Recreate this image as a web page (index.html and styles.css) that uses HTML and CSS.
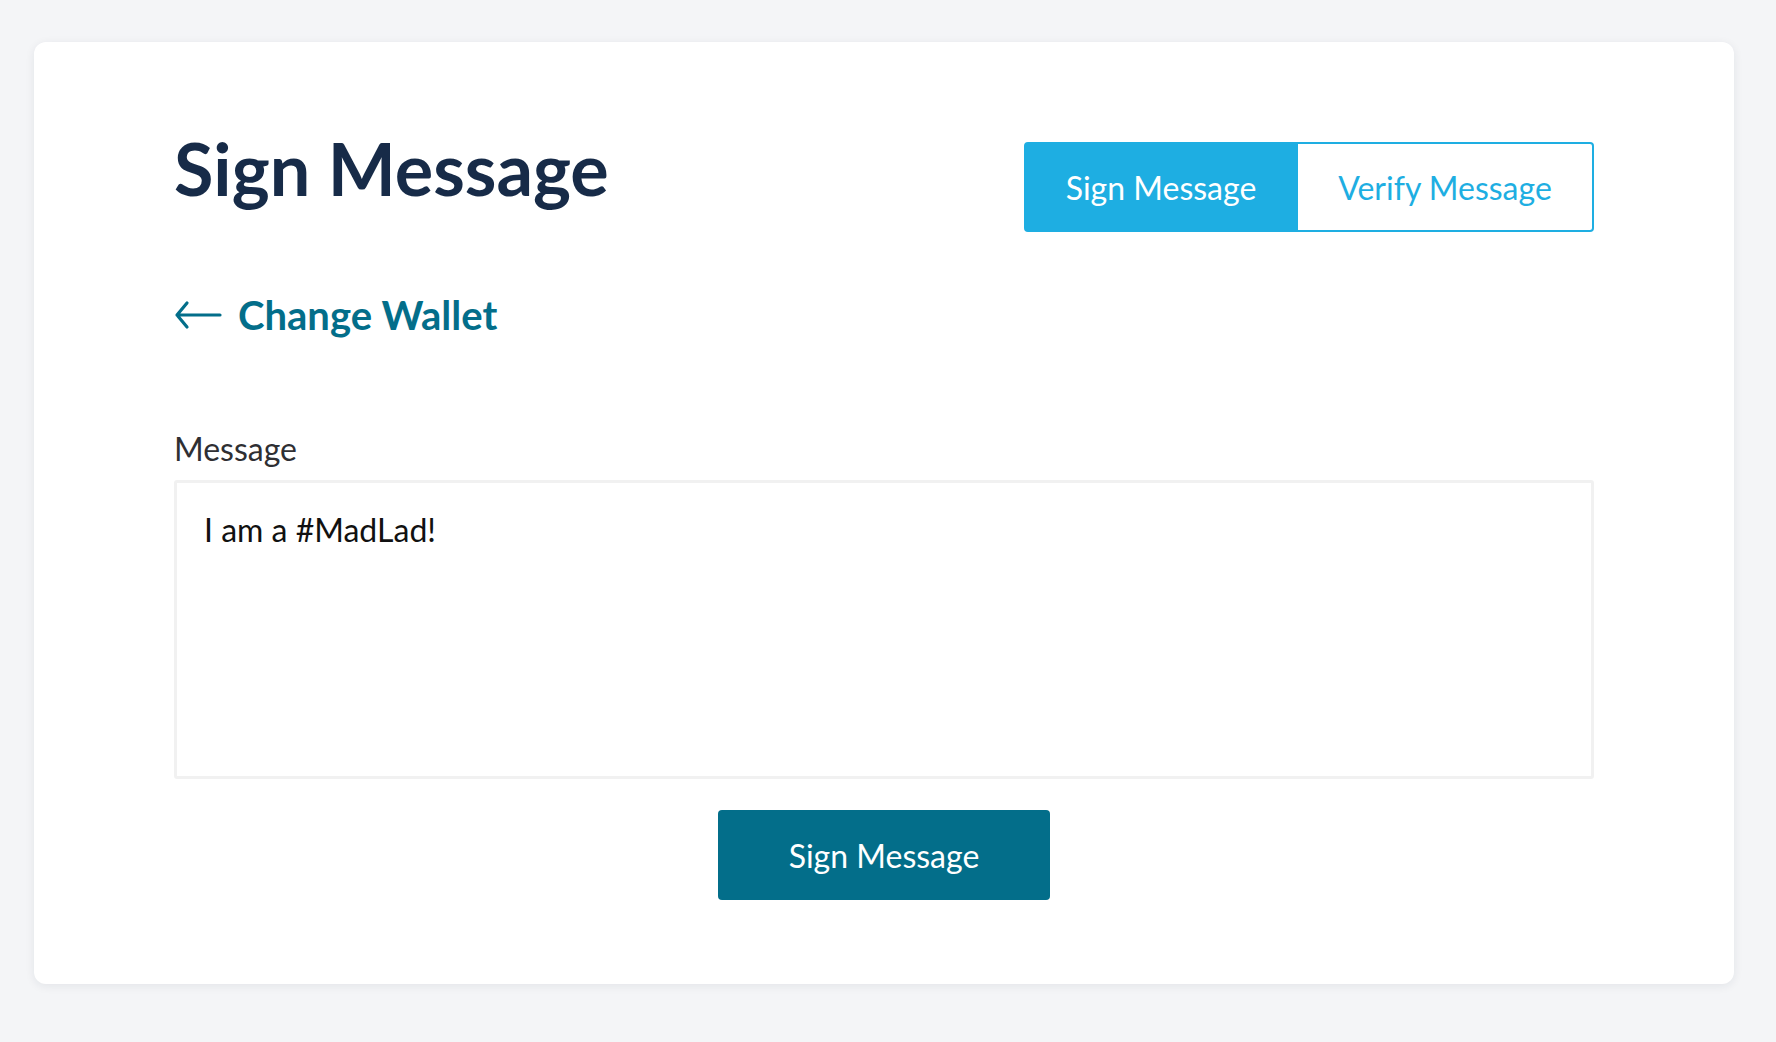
FILE: index.html
```html
<!DOCTYPE html>
<html lang="en">
<head>
<meta charset="utf-8">
<title>Sign Message</title>
<link rel="stylesheet" href="styles.css">
</head>
<body>
<main class="page">
  <section class="card">
    <header class="card-header">
      <h1 class="title">Sign Message</h1>
      <nav class="tabs">
        <button class="tab tab-active" type="button">Sign Message</button>
        <button class="tab" type="button">Verify Message</button>
      </nav>
    </header>
    <a class="back-link" href="#">
      <svg class="back-icon" width="48" height="30" viewBox="0 0 48 30" aria-hidden="true">
        <path d="M46 15H3M13 3L3 15l10 12" fill="none" stroke="currentColor" stroke-width="3.2" stroke-linecap="round" stroke-linejoin="round"/>
      </svg>
      <span>Change Wallet</span>
    </a>
    <label class="field-label" for="msg">Message</label>
    <textarea class="field" id="msg">I am a #MadLad!</textarea>
    <div class="actions">
      <button class="primary" type="button">Sign Message</button>
    </div>
  </section>
</main>
</body>
</html>
```

FILE: styles.css
```css
* { box-sizing: border-box; }
html, body { margin: 0; padding: 0; }
body {
  background: #f4f5f7;
  font-family: Lato, "Open Sans", sans-serif;
  width: 1776px;
  height: 1042px;
  overflow: hidden;
}
.page {
  padding: 42px 42px 0 34px;
}
.card {
  width: 1700px;
  height: 942px;
  background: #ffffff;
  border-radius: 12px;
  box-shadow: 0 2px 10px rgba(30, 40, 60, 0.08);
  padding: 90px 140px 0 140px;
  display: flex;
  flex-direction: column;
}
.card-header {
  display: flex;
  justify-content: space-between;
  align-items: flex-start;
}
.title {
  margin: 0;
  font-size: 72px;
  line-height: 1;
  font-weight: 700;
  color: #172b48;
  letter-spacing: 0;
}
.tabs {
  display: flex;
  margin-top: 10px;
  height: 90px;
}
.tab {
  font-family: Lato, "Open Sans", sans-serif;
  font-size: 32px;
  font-weight: 400;
  border: 2px solid #1eaee2;
  background: #fff;
  color: #1eaee2;
  padding: 0;
  cursor: pointer;
}
.tab-active {
  width: 274px;
  background: #1eaee2;
  color: #fff;
  border-radius: 4px 0 0 4px;
}
.tab:not(.tab-active) {
  width: 296px;
  border-left: none;
  border-radius: 0 4px 4px 0;
}
.back-link {
  display: flex;
  align-items: center;
  gap: 16px;
  margin-top: 59px;
  color: #036e8a;
  text-decoration: none;
  font-size: 40px;
  font-weight: 700;
  line-height: 48px;
  align-self: flex-start;
}
.back-icon { display: block; margin-top: 0; }
.field-label {
  margin-top: 90px;
  font-size: 32px;
  line-height: 40px;
  color: #2f2f33;
}
.field {
  margin-top: 11px;
  width: 100%;
  height: 299px;
  border: 3px solid #f1f1f1;
  border-radius: 3px;
  padding: 27px 27px;
  font-family: Lato, "Open Sans", sans-serif;
  font-size: 32px;
  line-height: 40px;
  color: #111;
  resize: none;
  outline: none;
}
.actions {
  display: flex;
  justify-content: center;
  margin-top: 31px;
}
.primary {
  width: 332px;
  height: 90px;
  background: #036e8a;
  color: #fff;
  border: none;
  border-radius: 4px;
  font-family: Lato, "Open Sans", sans-serif;
  font-size: 32px;
  padding: 0;
}
```
